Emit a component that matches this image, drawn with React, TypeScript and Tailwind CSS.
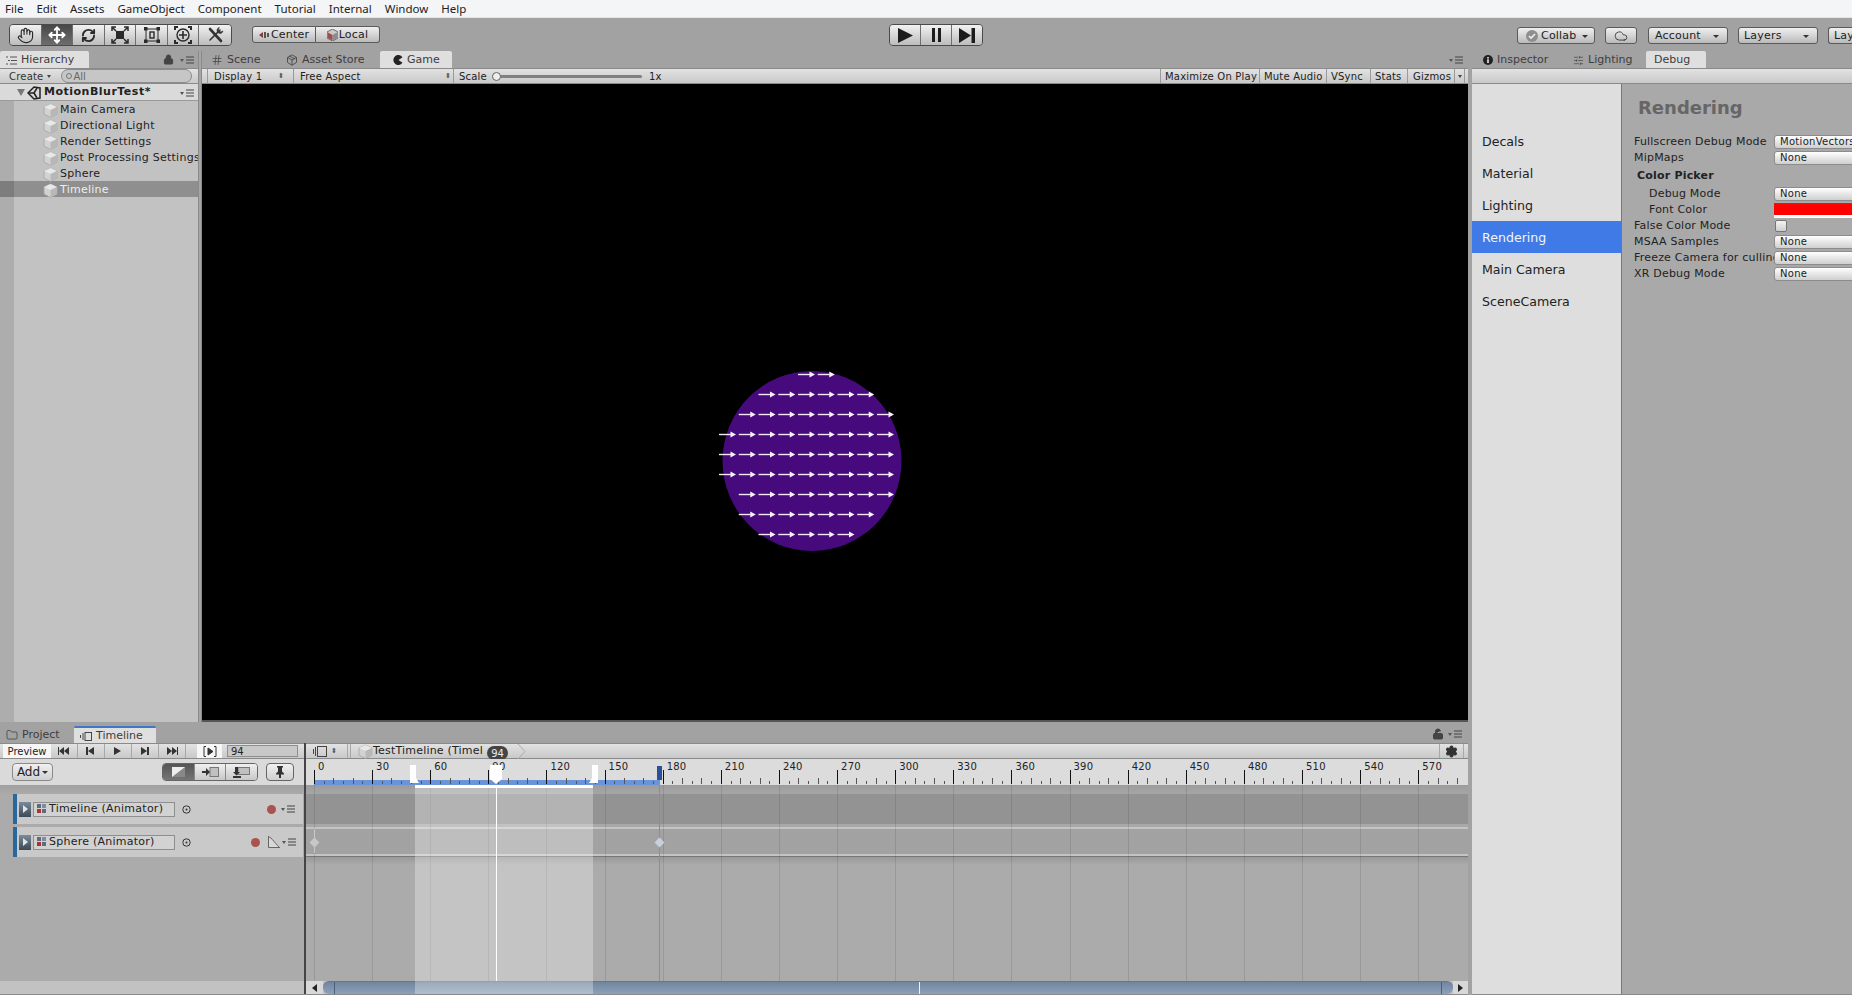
import { Hand, Move, RefreshCw, Cloud, Hash, Package, SlidersHorizontal, Settings, Folder, Lock, LockOpen } from "lucide-react";
import type { ReactNode } from "react";

const menus = ["File", "Edit", "Assets", "GameObject", "Component", "Tutorial", "Internal", "Window", "Help"];
const sceneItems = ["Main Camera", "Directional Light", "Render Settings", "Post Processing Settings", "Sphere", "Timeline"];
const debugTabs = ["Decals", "Material", "Lighting", "Rendering", "Main Camera", "SceneCamera"];

// sphere arrows: [first col, last col] per row
const arrowRows = [[4, 5], [2, 7], [1, 8], [0, 8], [0, 8], [0, 8], [1, 8], [1, 7], [2, 6]];

const frameX = (f: number) => 8 + (f * 58.12) / 30;
const labels = Array.from({ length: 20 }, (_, i) => i * 30);
const ticks = Array.from({ length: 120 }, (_, i) => i * 5);

function MenuIcon() {
  return (
    <svg width="14" height="8" viewBox="0 0 14 8" className="shrink-0">
      <path d="M0 3h4L2 6z" fill="#555" />
      <path d="M6 1h8M6 4h8M6 7h8" stroke="#444" strokeWidth="1.2" />
    </svg>
  );
}

function Cube() {
  return (
    <svg width="15" height="15" viewBox="0 0 15 15" className="shrink-0">
      <path d="M7.5 1 14 4v7l-6.5 3.5L1 11V4z" fill="#d2d2d2" stroke="#a4a4a4" strokeWidth="0.8" />
      <path d="M1 4l6.5 3L14 4 7.5 1z" fill="#e8e8e8" />
      <path d="M7.5 7 14 4v7l-6.5 3.5z" fill="#b8b8b8" />
    </svg>
  );
}

function Tab({ children, active, className }: { children: ReactNode; active?: boolean; className?: string }) {
  return (
    <div className={`flex h-[17px] items-center gap-[4px] rounded-t-[2px] pt-[1px] text-[11px] text-[#3d3d3d] ${active ? "bg-[#dfdfdf]" : ""} ${className ?? ""}`}>
      {children}
    </div>
  );
}

function Drop({ children }: { children: ReactNode }) {
  return (
    <div className="h-[14px] w-[100px] shrink-0 rounded-[3px] border border-[#8c8c8c] bg-gradient-to-b from-[#ffffff] to-[#cfcfcf] pl-[5px] text-[10px] leading-[12px] tracking-[0.3px] whitespace-nowrap text-[#222]">
      {children}
    </div>
  );
}

function FormRow({ label, indent, children }: { label: string; indent?: boolean; children: ReactNode }) {
  return (
    <div className="flex h-[16px] items-center">
      <div className={`w-[140px] shrink-0 overflow-hidden text-[11px] tracking-[0.2px] whitespace-nowrap text-[#222] ${indent ? "pl-[15px]" : ""}`}>{label}</div>
      {children}
    </div>
  );
}

function ToolBtn({ children, active, last }: { children: ReactNode; active?: boolean; last?: boolean }) {
  return (
    <div className={`flex h-full w-[32px] items-center justify-center ${last ? "" : "border-r border-[#6e6e6e]"} ${active ? "bg-gradient-to-b from-[#484848] to-[#6e6e6e] text-white" : "bg-gradient-to-b from-[#f2f2f2] to-[#bcbcbc] text-[#2a2a2a]"}`}>
      {children}
    </div>
  );
}

function TopBtn({ children, className }: { children: ReactNode; className?: string }) {
  return (
    <div className={`flex h-[17px] items-center rounded-[3px] border border-[#5a5a5a] bg-gradient-to-b from-[#f0f0f0] to-[#bababa] pt-[1px] text-[11px] tracking-[0.2px] text-[#222] ${className ?? ""}`}>
      {children}
    </div>
  );
}

function Arrow() {
  return <span className="ml-auto h-0 w-0 border-x-[3px] border-t-[3px] border-x-transparent border-t-[#333]" />;
}

function TrackRow({ name, curve }: { name: string; curve?: boolean }) {
  return (
    <div className="flex h-[30px] w-[290px] items-center border-l-[4px] border-[#2a679c] bg-[#c9c9c9] pl-[2px]">
      <div className="flex h-[15px] w-[12px] items-center justify-center bg-gradient-to-b from-[#7b8b99] to-[#3d4a55]">
        <span className="h-0 w-0 border-y-[4px] border-l-[5px] border-y-transparent border-l-[#dfe6ea]" />
      </div>
      <div className="ml-[2px] flex h-[15px] w-[142px] items-center gap-[3px] border border-[#8e8e8e] bg-[#d2d2d2] pl-[3px] text-[11px] tracking-[0.25px] text-[#222]">
        <svg width="9" height="11" viewBox="0 0 9 11" className="shrink-0">
          <rect x="0" y="0" width="4" height="4" fill="#5d6d80" />
          <rect x="5" y="0" width="4" height="4" fill="#7d8d9e" />
          <rect x="5" y="5" width="4" height="4" fill="#5d6d80" />
          <rect x="0" y="5" width="4" height="4" fill="#a33" />
        </svg>
        {name}
      </div>
      <svg width="9" height="9" viewBox="0 0 9 9" className="ml-[7px] shrink-0">
        <circle cx="4.5" cy="4.5" r="3.7" fill="none" stroke="#333" />
        <circle cx="4.5" cy="4.5" r="1" fill="#333" />
      </svg>
      {curve ? (
        <>
          <span className="ml-[60px] h-[9px] w-[9px] shrink-0 rounded-full bg-[#a8534e]" />
          <svg width="12" height="12" viewBox="0 0 12 12" className="ml-[8px] shrink-0">
            <path d="M0 0v11h11z" fill="#d8d8d8" />
            <path d="M.5 0v11.5H12M.5 .5C4 2 7 7 11 11" fill="none" stroke="#666" />
          </svg>
          <div className="ml-[2px]"><MenuIcon /></div>
        </>
      ) : (
        <>
          <span className="ml-[76px] h-[9px] w-[9px] shrink-0 rounded-full bg-[#a8534e]" />
          <div className="ml-[5px]"><MenuIcon /></div>
        </>
      )}
    </div>
  );
}

export default function App() {
  return (
    <div className="flex h-[995px] w-[1852px] flex-col overflow-hidden bg-[#a2a2a2] font-['DejaVu_Sans',sans-serif] text-[11px]">
      {/* window menu */}
      <div className="flex h-[18px] shrink-0 items-center gap-[13px] border-b border-[#e4e4e4] bg-[#f4f5f7] pl-[5px] font-['Noto_Sans',sans-serif] text-[11.5px] text-[#222]">
        {menus.map((m) => (
          <span key={m}>{m}</span>
        ))}
      </div>

      {/* main toolbar */}
      <div className="relative flex h-[33px] shrink-0 items-start bg-[#a2a2a2] pt-[6px]">
        <div className="ml-[9px] flex h-[22px] w-[223px] overflow-hidden rounded-[4px] border border-[#4a4a4a]">
          <ToolBtn><Hand size={17} strokeWidth={1.6} /></ToolBtn>
          <ToolBtn active><Move size={18} strokeWidth={2.4} /></ToolBtn>
          <ToolBtn><RefreshCw size={15} strokeWidth={3} /></ToolBtn>
          <ToolBtn>
            <svg width="18" height="18" viewBox="0 0 18 18" fill="none" stroke="#2a2a2a" strokeWidth="2">
              <rect x="6" y="6" width="6" height="6" fill="#2a2a2a" />
              <path d="M1 5V1h4M17 5V1h-4M1 13v4h4M17 13v4h-4M2 2l3 3M16 2l-3 3M2 16l3-3M16 16l-3-3" strokeWidth="1.5" />
            </svg>
          </ToolBtn>
          <ToolBtn>
            <svg width="16" height="16" viewBox="0 0 16 16" fill="none" stroke="#2a2a2a" strokeWidth="1">
              <rect x="2" y="2" width="12" height="12" />
              <rect x="6" y="5" width="4" height="6" strokeWidth="1.4" />
              <rect x="0" y="0" width="3" height="3" fill="#2a2a2a" />
              <rect x="13" y="0" width="3" height="3" fill="#2a2a2a" />
              <rect x="0" y="13" width="3" height="3" fill="#2a2a2a" />
              <rect x="13" y="13" width="3" height="3" fill="#2a2a2a" />
            </svg>
          </ToolBtn>
          <ToolBtn>
            <svg width="18" height="18" viewBox="0 0 18 18" fill="none" stroke="#2a2a2a" strokeWidth="1.4">
              <circle cx="9" cy="9" r="6" />
              <path d="M9 5v8M5 9h8" strokeWidth="1.6" />
              <path d="M1 4V1h3M17 4V1h-3M1 14v3h3M17 14v3h-3" strokeWidth="2" />
            </svg>
          </ToolBtn>
          <ToolBtn last>
            <svg width="18" height="18" viewBox="0 0 18 18" fill="none" stroke="#333" strokeLinecap="round">
              <path d="M4 3 15 15" strokeWidth="2.6" />
              <path d="M14 4 4 14" strokeWidth="1.6" />
              <path d="M13 1.500a3 3 0 0 0-1.500 4.500l1 1a3 3 0 0 0 4.500-2l-2.500 1-2-2z" fill="#333" strokeWidth="0.6" />
            </svg>
          </ToolBtn>
        </div>
        <div className="ml-[20px] mt-[2px] flex">
          <TopBtn className="w-[64px] justify-center gap-[2px] rounded-r-none">
            <svg width="10" height="8" viewBox="0 0 10 8" className="shrink-0">
              <path d="M0 4 4 1v6z" fill="#8a3a3a" />
              <path d="M5 1h2v6H5zM8 2h2v4H8z" fill="#555" />
            </svg>
            Center
          </TopBtn>
          <TopBtn className="w-[64px] justify-center gap-[1px] rounded-l-none border-l-0">
            <svg width="11" height="12" viewBox="0 0 11 12" className="shrink-0">
              <path d="M5.500 0 11 3v6l-5.500 3L0 9V3z" fill="#c9c9c9" stroke="#555" strokeWidth="0.8" />
              <path d="M.5 3.200 5.500 6v5.500L.5 8.800z" fill="#a34a4a" />
              <path d="M10.500 3.200 5.500 6v5.500l5-2.700z" fill="#8c8c8c" />
            </svg>
            Local
          </TopBtn>
        </div>

        <div className="absolute left-[889px] top-[6px] flex h-[22px] w-[94px] overflow-hidden rounded-[4px] border border-[#4a4a4a]">
          <div className="flex h-full flex-1 items-center justify-center border-r border-[#6e6e6e] bg-gradient-to-b from-[#f2f2f2] to-[#bcbcbc]">
            <svg width="15" height="15" viewBox="0 0 15 15"><path d="M0 0 15 7.500 0 15z" fill="#1c1c1c" /></svg>
          </div>
          <div className="flex h-full flex-1 items-center justify-center border-r border-[#6e6e6e] bg-gradient-to-b from-[#f2f2f2] to-[#bcbcbc]">
            <svg width="11" height="14" viewBox="0 0 11 14"><path d="M1 0h3v14H1zM7 0h3v14H7z" fill="#1c1c1c" /></svg>
          </div>
          <div className="flex h-full flex-1 items-center justify-center bg-gradient-to-b from-[#f2f2f2] to-[#bcbcbc]">
            <svg width="16" height="15" viewBox="0 0 16 15"><path d="M0 0 12 7.500 0 15zM12.500 0H16v15h-3.500z" fill="#1c1c1c" /></svg>
          </div>
        </div>

        <div className="ml-auto mt-[3px] flex items-center">
          <TopBtn className="w-[78px] pl-[8px] pr-[6px]">
            <svg width="12" height="12" viewBox="0 0 12 12" className="mr-[3px]">
              <circle cx="6" cy="6" r="6" fill="#8e8e8e" />
              <path d="M3 6l2 2 4-4" stroke="#eee" strokeWidth="1.6" fill="none" />
            </svg>
            Collab<Arrow />
          </TopBtn>
          <TopBtn className="ml-[10px] w-[32px] justify-center"><Cloud size={14} strokeWidth={1.3} /></TopBtn>
          <TopBtn className="ml-[11px] w-[80px] pl-[6px] pr-[8px]">Account<Arrow /></TopBtn>
          <TopBtn className="ml-[10px] w-[80px] pl-[5px] pr-[8px]">Layers<Arrow /></TopBtn>
          <TopBtn className="ml-[10px] w-[24px] overflow-hidden rounded-r-none border-r-0 pl-[5px]">Lay</TopBtn>
        </div>
      </div>

      <div className="flex min-h-0 flex-1">
        {/* left side: hierarchy + game over timeline */}
        <div className="flex w-[1472px] shrink-0 flex-col">
          <div className="flex h-[671px] w-[1468px] shrink-0">
            {/* hierarchy */}
            <div className="flex w-[198px] shrink-0 flex-col">
              <div className="flex h-[17px] items-center">
                <Tab active className="w-[89px] pl-[6px]">
                  <svg width="11" height="9" viewBox="0 0 11 9" stroke="#555"><path d="M0 1h2M4 1h7M2 4.500h2M5 4.500h6M0 8h2M4 8h7" /></svg>
                  Hierarchy
                </Tab>
                <Lock size={11} className="ml-[74px] fill-[#444] text-[#444]" />
                <div className="ml-[6px]"><MenuIcon /></div>
              </div>
              <div className="flex h-[16px] items-center border-y border-[#8a8a8a] bg-gradient-to-b from-[#e2e2e2] to-[#c9c9c9] text-[#333]">
                <span className="pl-[9px] text-[10px] tracking-[0.2px]">Create</span>
                <span className="ml-[4px] h-0 w-0 border-x-[2.5px] border-t-[3px] border-x-transparent border-t-[#444]" />
                <div className="ml-[10px] flex h-[14px] w-[131px] items-center rounded-full border border-[#8c8c8c] bg-[#c6c6c6] pl-[4px] text-[10px] text-[#666]">
                  <span className="mr-[1px] h-[6px] w-[6px] rounded-full border border-[#777]" />All
                </div>
              </div>
              <div className="flex min-h-0 flex-1 flex-col bg-[#c2c2c2]">
                <div className="flex h-[17px] items-center border-b border-[#9a9a9a] bg-[#dadada] pl-[17px] pt-[1px] font-bold tracking-[0.5px] text-[#222]">
                  <span className="h-0 w-0 border-x-[4px] border-t-[7px] border-x-transparent border-t-[#777]" />
                  <svg width="14" height="14" viewBox="0 0 14 14" className="ml-[2px] mr-[3px]" fill="none" stroke="#222" strokeWidth="1.5">
                    <path d="M7 1 1 7l6 6 6-1V2z" />
                    <path d="M1 7h6l3-5M7 7l3 5" />
                  </svg>
                  MotionBlurTest*
                  <div className="ml-auto mr-[4px]"><MenuIcon /></div>
                </div>
                <div className="flex flex-1">
                  <div className="flex w-[14px] shrink-0 flex-col bg-[#adadad]">
                    <div className="h-[80px]" />
                    <div className="h-[16px] bg-[#7d7d7d]" />
                  </div>
                  <div className="min-w-0 flex-1">
                    {sceneItems.map((s) => (
                      <div key={s} className={`flex h-[16px] items-center gap-[2px] whitespace-nowrap pl-[29px] pt-[2px] tracking-[0.25px] ${s === "Timeline" ? "bg-[#8f8f8f] text-[#eeeeee]" : "text-[#222]"}`}>
                        <Cube />
                        {s}
                      </div>
                    ))}
                  </div>
                </div>
              </div>
            </div>
            <div className="w-[4px] shrink-0 border-x border-[#8a8a8a] bg-[#a6a6a6]" />

            {/* game view */}
            <div className="flex min-w-0 flex-1 flex-col">
              <div className="flex h-[17px] items-center text-[#3d3d3d]">
                <Tab className="ml-[9px] w-[64px]"><Hash size={12} strokeWidth={1.4} />Scene</Tab>
                <Tab className="ml-[11px] w-[90px]"><Package size={12} strokeWidth={1.6} />Asset Store</Tab>
                <Tab active className="ml-[4px] w-[72px] pl-[13px]">
                  <svg width="10" height="10" viewBox="0 0 10 10"><path d="M9.500 2.200A5 5 0 1 0 9.500 7.800L5.500 5z" fill="#222" /></svg>
                  Game
                </Tab>
                <div className="ml-auto mr-[5px]"><MenuIcon /></div>
              </div>
              <div className="flex h-[16px] items-center border-y border-[#8a8a8a] bg-gradient-to-b from-[#e2e2e2] to-[#c9c9c9] text-[10px] tracking-[0.2px] text-[#222]">
                <div className="ml-[5px] flex h-full w-[86px] items-center border-l border-[#9a9a9a] pl-[6px]">Display 1<span className="ml-auto mr-[9px] text-[7px] leading-none text-[#555]">⬍</span></div>
                <div className="flex h-full w-[160px] items-center border-l border-[#9a9a9a] pl-[6px]">Free Aspect<span className="ml-auto mr-[2px] text-[7px] leading-none text-[#555]">⬍</span></div>
                <div className="flex h-full items-center border-l border-[#9a9a9a] pl-[5px]">
                  Scale
                  <span className="relative ml-[5px] h-[3px] w-[150px] rounded-full bg-[#808080]">
                    <span className="absolute -top-[3px] left-0 h-[9px] w-[9px] rounded-full border border-[#666] bg-[#eee]" />
                  </span>
                  <span className="ml-[7px]">1x</span>
                </div>
                <div className="ml-auto mr-[3px] flex h-full">
                  <div className="flex w-[99px] items-center border-l border-[#9a9a9a] pl-[4px]">Maximize On Play</div>
                  <div className="flex w-[67px] items-center border-l border-[#9a9a9a] pl-[4px]">Mute Audio</div>
                  <div className="flex w-[44px] items-center border-l border-[#9a9a9a] pl-[4px]">VSync</div>
                  <div className="flex w-[37px] items-center border-l border-[#9a9a9a] pl-[4px]">Stats</div>
                  <div className="flex w-[47px] items-center border-l border-[#9a9a9a] pl-[5px]">Gizmos</div>
                  <div className="flex w-[11px] items-center justify-center border-x border-[#9a9a9a]">
                    <span className="h-0 w-0 border-x-[2.5px] border-t-[3px] border-x-transparent border-t-[#444]" />
                  </div>
                </div>
              </div>
              <div className="min-h-0 flex-1 border-b-2 border-[#555] bg-black">
                <svg width="200" height="200" viewBox="0 0 200 200" className="ml-[510px] mt-[276px] block">
                  <ellipse cx="100" cy="101" rx="89.500" ry="90" fill="#460a7c" />
                  {arrowRows.map(([a, b], r) =>
                    Array.from({ length: b - a + 1 }, (_, i) => {
                      const x = 7 + (a + i) * 19.75;
                      const y = 14.5 + r * 20;
                      return (
                        <g key={`${r}-${i}`}>
                          <path d={`M${x} ${y}h12`} stroke="#f2e8f6" strokeWidth="1.4" />
                          <path d={`M${x + 11.5} ${y - 3}l5.500 3-5.500 3z`} fill="#f8f4fa" />
                        </g>
                      );
                    }),
                  )}
                </svg>
              </div>
            </div>
          </div>

          {/* timeline window */}
          <div className="flex h-[21px] w-[1468px] shrink-0 items-end">
            <Tab className="w-[74px] gap-[2px] pl-[6px]"><Folder size={12} strokeWidth={1.5} />Project</Tab>
            <Tab active className="w-[82px] gap-[2px] border-t-2 border-[#3f78c8] pl-[6px]">
              <svg width="12" height="9" viewBox="0 0 12 9" fill="none" stroke="#444"><path d="M.5 3v3M3 1v7" /><rect x="5" y=".5" width="6.500" height="8" /></svg>
              Timeline
            </Tab>
            <div className="mb-[3px] ml-auto mr-[6px] flex items-center gap-[4px]">
              <LockOpen size={12} className="fill-[#444] text-[#444]" />
              <MenuIcon />
            </div>
          </div>
          <div className="flex min-h-0 w-[1468px] flex-1 border-b border-[#8a8a8a]">
            {/* track list */}
            <div className="flex w-[304px] shrink-0 flex-col bg-[#ababab]">
              <div className="flex h-[16px] items-center border-y border-[#8a8a8a] bg-gradient-to-b from-[#e2e2e2] to-[#c9c9c9] text-[#222]">
                <div className="ml-[3px] flex h-full w-[48px] items-center justify-center bg-[#f6f6f6] text-[10px]">Preview</div>
                {["M11 1v8L6 5zM6 1v8L1 5zM0 1h1v8H0z", "M9 1v8L3 5zM1 1h2v8H1z", "M2 1v8l7-4z", "M2 1v8l6-4zM8 1h2v8H8z", "M1 1v8l5-4zM6 1v8l5-4zM11 1h1v8h-1z"].map((d, i) => (
                  <div key={i} className="flex h-full w-[27px] items-center justify-center border-r border-[#a8a8a8]">
                    <svg width="12" height="10" viewBox="0 0 12 10"><path d={d} fill="#333" /></svg>
                  </div>
                ))}
                <div className="ml-[11px] flex h-full w-[25px] items-center justify-center bg-[#f6f6f6]">
                  <svg width="14" height="11" viewBox="0 0 14 11" fill="none" stroke="#333"><path d="M3 .5H1v10h2M11 .5h2v10h-2" /><path d="M5 2v7l5-3.500z" fill="#333" /></svg>
                </div>
                <div className="ml-[5px] flex h-[12px] w-[71px] items-center border border-[#8e8e8e] bg-[#c8c8c8] pl-[3px] text-[10px]">94</div>
              </div>
              <div className="flex h-[26px] items-center bg-[#dadada]">
                <div className="ml-[12px] flex h-[18px] w-[41px] items-center justify-center gap-[2px] rounded-[4px] border border-[#8a8a8a] bg-gradient-to-b from-[#f0f0f0] to-[#d0d0d0] text-[12px] text-[#222]">
                  Add
                  <span className="h-0 w-0 border-x-[3px] border-t-[3px] border-x-transparent border-t-[#333]" />
                </div>
                <div className="ml-[109px] flex h-[18px] w-[96px] overflow-hidden rounded-[4px] border border-[#666]">
                  <div className="flex flex-1 items-center justify-center bg-gradient-to-b from-[#555] to-[#757575]">
                    <svg width="13" height="10" viewBox="0 0 13 10"><rect width="13" height="10" fill="#eee" /><path d="M0 10 13 0v10z" fill="#888" /></svg>
                  </div>
                  <div className="flex flex-1 items-center justify-center border-x border-[#888] bg-gradient-to-b from-[#f0f0f0] to-[#c8c8c8]">
                    <svg width="17" height="10" viewBox="0 0 17 10"><rect x="8" y=".5" width="8.500" height="9" fill="#c0c0c0" stroke="#777" /><path d="M0 4h4V1l4 4-4 4V6H0z" fill="#333" /></svg>
                  </div>
                  <div className="flex flex-1 items-center justify-center bg-gradient-to-b from-[#f0f0f0] to-[#c8c8c8]">
                    <svg width="17" height="11" viewBox="0 0 17 11"><rect x="5" y=".5" width="11.500" height="7" fill="#c0c0c0" stroke="#777" /><path d="M2 0h3v5h2l-3.500 3.500L0 5h2zM0 9h8v2H0z" fill="#333" /></svg>
                  </div>
                </div>
                <div className="ml-[8px] flex h-[18px] w-[28px] items-center justify-center rounded-[4px] border border-[#666] bg-gradient-to-b from-[#f0f0f0] to-[#d0d0d0]">
                  <svg width="10" height="12" viewBox="0 0 10 12"><path d="M2 0h6v1.500H7v4l2 2v1H6V12H4V8.500H1v-1l2-2v-4H2z" fill="#333" /></svg>
                </div>
              </div>
              <div className="flex min-h-0 flex-1 flex-col gap-[3px] bg-gradient-to-b from-[#a0a0a0] to-[#ababab] to-[5%] pl-[13px] pt-[9px]">
                <TrackRow name="Timeline (Animator)" />
                <TrackRow name="Sphere (Animator)" curve />
              </div>
              <div className="h-[13px] shrink-0 bg-[#c2c2c2]" />
            </div>
            <div className="w-[2px] shrink-0 bg-[#444]" />

            {/* clip area */}
            <div className="flex min-w-0 flex-1 flex-col">
              <div className="relative flex h-[16px] shrink-0 items-center border-y border-[#8a8a8a] bg-gradient-to-b from-[#e2e2e2] to-[#c9c9c9] text-[#222]">
                <div className="ml-[7px] flex w-[28px] items-center gap-[4px]">
                  <svg width="14" height="11" viewBox="0 0 14 11" fill="none" stroke="#444"><path d="M.5 3v5M2.500 1v9" /><rect x="4.500" y=".5" width="9" height="10" /></svg>
                  <span className="text-[7px] leading-none text-[#555]">⬍</span>
                </div>
                <div className="ml-[6px] h-full w-[4px] border-x border-[#a8a8a8]" />
                <div className="ml-[7px] flex items-center gap-[0px] pt-[1px] text-[11px] tracking-[0.2px]">
                  <Cube />
                  <span className="whitespace-nowrap">TestTimeline (Timel</span>
                </div>
                <span className="absolute left-[181px] top-[2px] flex h-[14px] w-[21px] items-center justify-center rounded-full bg-[#444] text-[10px] text-[#eee]">94</span>
                <svg width="9" height="15" viewBox="0 0 9 15" fill="none" stroke="#aaa" className="absolute left-[211px] top-0"><path d="M1 0l7 7.500L1 15" /></svg>
                <div className="ml-auto mr-[4px] flex h-full w-[25px] items-center justify-center border-x border-[#a8a8a8]">
                  <Settings size={13} strokeWidth={2.4} className="fill-[#333] text-[#333]" />
                </div>
              </div>

              <div className="relative h-[26px] shrink-0 bg-[#dcdcdc]">
                <svg width="1162" height="26" className="absolute inset-0">
                  <rect x="8" y="21" width="346" height="5" fill="#6a94d8" />
                  {ticks.filter((f) => frameX(f) < 1160).map((f) => {
                    const x = Math.round(frameX(f)) + 0.5;
                    const top = f % 30 === 0 ? 11 : f % 10 === 0 ? 19 : 22;
                    return <path key={f} d={`M${x} ${top}V25`} stroke={f % 30 === 0 ? "#111" : "#555"} />;
                  })}
                  <rect x="351" y="7" width="5" height="14" fill="#2a4f9d" />
                </svg>
                {labels.map((l) => (
                  <span key={l} className="absolute top-[2px] text-[10px] leading-[12px] tracking-[0.2px] text-[#222]" style={{ left: frameX(l) + 4 }}>
                    {l}
                  </span>
                ))}
                <svg width="1162" height="26" className="absolute inset-0">
                  <path d="M104 6h6v13l3 5h-9zM286 6h6v18h-9l3-5z" fill="#fff" />
                  <path d="M184 6h12v14l-6 5-6-5z" fill="#fff" />
                </svg>
              </div>

              <div className="relative flex min-h-0 flex-1 flex-col">
                <div className="h-[9px] bg-gradient-to-b from-[#9c9c9c] to-[#a6a6a6]" />
                <div className="h-[30px] bg-[#939393]" />
                <div className="h-[3px] bg-[#a8a8a8]" />
                <div className="h-[2px] bg-[#c4c4c4]" />
                <div className="h-[25px] bg-[#a2a2a2]" />
                <div className="h-[2px] bg-[#c4c4c4]" />
                <div className="h-[1px] bg-[#777]" />
                <div className="h-[8px] bg-gradient-to-b from-[#999] to-[#ababab]" />
                <div className="min-h-0 flex-1 bg-[#ababab]" />

                <div className="flex h-[13px] shrink-0 bg-[#c2c2c2]">
                  <div className="flex w-[17px] shrink-0 items-center justify-center bg-[#d8d8d8]">
                    <span className="h-0 w-0 border-y-[4px] border-r-[5px] border-y-transparent border-r-[#222]" />
                  </div>
                  <div className="relative flex-1 rounded-[6px] border-t border-[#66768e] bg-gradient-to-b from-[#72859f] to-[#8ea1bb]">
                    <span className="absolute inset-y-0 left-[11px] w-px bg-[#4d6080]" />
                    <span className="absolute inset-y-0 left-[596px] w-px bg-[#eef2f8]" />
                    <span className="absolute inset-y-0 right-[11px] w-px bg-[#4d6080]" />
                  </div>
                  <div className="flex w-[15px] shrink-0 items-center justify-center bg-[#d8d8d8]">
                    <span className="h-0 w-0 border-y-[4px] border-l-[5px] border-y-transparent border-l-[#222]" />
                  </div>
                </div>

                {/* overlays: grid lines, selection, playhead, keys */}
                {labels.map((l) => (
                  <span key={l} className="absolute bottom-[13px] top-0 w-px bg-black/10" style={{ left: Math.round(frameX(l)) }} />
                ))}
                <span className="absolute bottom-0 left-[109px] top-0 w-[178px] bg-white/30" />
                <span className="absolute left-[109px] top-0 h-[3px] w-[178px] bg-white" />
                <span className="absolute bottom-[13px] left-[353px] top-0 w-px bg-[#6f8fd0]" />
                <span className="absolute bottom-[13px] left-[190px] top-0 w-px bg-white" />
                <span className="absolute left-[8px] top-[44px] h-[24px] w-px bg-[#c8c8c8]" />
                <span className="absolute left-[5px] top-[54px] h-[7px] w-[7px] rotate-45 bg-[#c8c8c8]" />
                <span className="absolute left-[350px] top-[54px] h-[7px] w-[7px] rotate-45 bg-[#c8d0e0]" />
              </div>
            </div>
          </div>
        </div>

        {/* right: inspector / lighting / debug */}
        <div className="flex min-w-0 flex-1 flex-col">
          <div className="flex h-[17px] shrink-0 items-center text-[#3d3d3d]">
            <Tab className="ml-[6px] w-[90px] pl-[5px]">
              <svg width="10" height="10" viewBox="0 0 10 10"><circle cx="5" cy="5" r="5" fill="#222" /><path d="M4.200 2h1.600v1.400H4.200zM4.200 4.200h1.600V8H4.200z" fill="#eee" /></svg>
              Inspector
            </Tab>
            <Tab className="w-[78px] gap-[3px] pl-[5px]"><SlidersHorizontal size={11} strokeWidth={1.4} />Lighting</Tab>
            <Tab active className="w-[60px] pl-[8px]">Debug</Tab>
          </div>
          <div className="h-[16px] shrink-0 border-y border-[#8a8a8a] bg-gradient-to-b from-[#e2e2e2] to-[#c9c9c9]" />
          <div className="flex min-h-0 flex-1 border-b border-[#8a8a8a]">
            <div className="w-[150px] shrink-0 border-r border-[#777] bg-[#dedede] pt-[41px]">
              {debugTabs.map((t) => (
                <div key={t} className={`flex h-[32px] items-center pl-[10px] pt-[2px] text-[12.6px] ${t === "Rendering" ? "bg-[#3f7ae6] text-[#f4f4f4]" : "text-[#222]"}`}>
                  {t}
                </div>
              ))}
            </div>
            <div className="min-w-0 flex-1 overflow-hidden bg-[#a9a9a9] pl-[12px]">
              <div className="flex h-[46px] items-center pl-[4px] text-[18px] font-bold text-[#666]">Rendering</div>
              <div className="h-[4px]" />
              <FormRow label="Fullscreen Debug Mode"><Drop>MotionVectors</Drop></FormRow>
              <FormRow label="MipMaps"><Drop>None</Drop></FormRow>
              <div className="flex h-[20px] items-center pl-[3px] pt-[1px] font-bold tracking-[0.2px] text-[#222]">Color Picker</div>
              <FormRow label="Debug Mode" indent><Drop>None</Drop></FormRow>
              <FormRow label="Font Color" indent>
                <div className="h-[15px] w-[100px] shrink-0 border-t border-[#555] bg-white">
                  <div className="h-[11px] bg-[#fe0000]" />
                </div>
              </FormRow>
              <FormRow label="False Color Mode">
                <div className="ml-[1px] h-[12px] w-[12px] rounded-[2px] border border-[#777] bg-gradient-to-b from-[#f4f4f4] to-[#cfcfcf]" />
              </FormRow>
              <FormRow label="MSAA Samples"><Drop>None</Drop></FormRow>
              <FormRow label="Freeze Camera for culling"><Drop>None</Drop></FormRow>
              <FormRow label="XR Debug Mode"><Drop>None</Drop></FormRow>
            </div>
          </div>
        </div>
      </div>
    </div>
  );
}
